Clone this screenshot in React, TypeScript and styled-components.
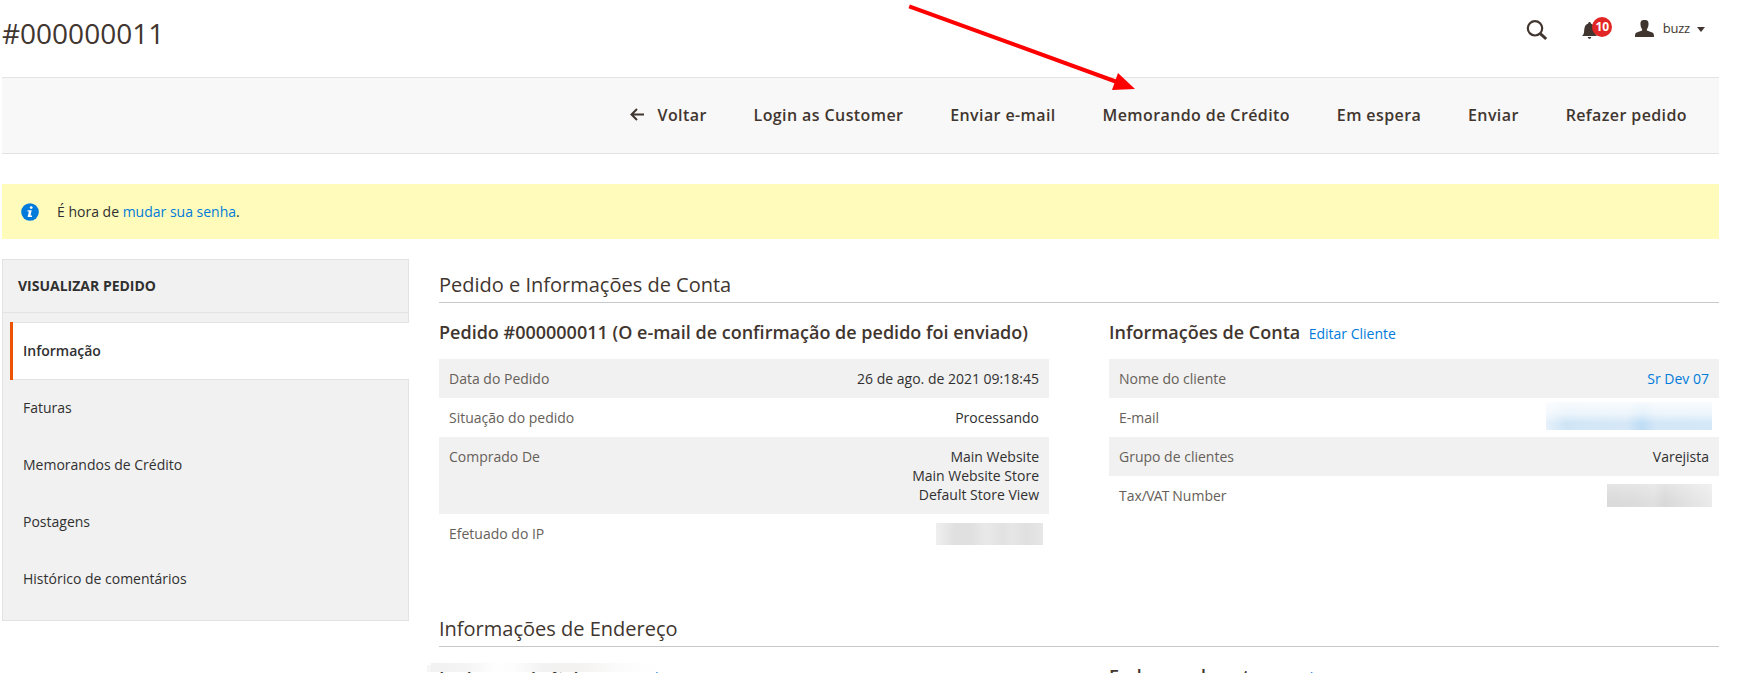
import React from "react";
import styled, { createGlobalStyle, css } from "styled-components";

const GlobalStyle = createGlobalStyle`
  * { box-sizing: border-box; }
  body { margin: 0; background: #fff; overflow: hidden; }
`;

const Page = styled.div`
  position: relative;
  width: 1748px;
  height: 673px;
  overflow: hidden;
  padding: 0 29px 0 2px;
  font-family: "Open Sans", "Liberation Sans", sans-serif;
  font-size: 14px;
  line-height: 19px;
  color: #303030;
`;

const Header = styled.header`
  display: flex;
  justify-content: space-between;
  height: 77px;
`;

const PageTitle = styled.h1`
  margin: 14px 0 0;
  font-size: 28px;
  font-weight: 400;
  line-height: 38px;
  color: #41362f;
`;

const HeaderTools = styled.div`
  display: flex;
  align-items: flex-start;
  padding-right: 14px;
  color: #41362f;
`;

const SearchButton = styled.div`
  display: flex;
  margin: 20px 34px 0 0;
`;

const Notifications = styled.div`
  position: relative;
  display: flex;
  width: 30px;
  margin: 22px 23px 0 0;
`;

const Badge = styled.span`
  position: absolute;
  left: 10.5px;
  top: -5px;
  width: 20px;
  height: 20px;
  border-radius: 50%;
  background: #e22626;
  color: #fff;
  font-size: 12px;
  font-weight: 700;
  letter-spacing: -0.3px;
  line-height: 20px;
  text-align: center;
`;

const Account = styled.div`
  display: flex;
  align-items: flex-start;
  margin-top: 20px;
`;

const AccountName = styled.span`
  margin: -1px 7px 0 9px;
  font-size: 13px;
  letter-spacing: -0.2px;
  line-height: 18px;
`;

const Caret = styled.span`
  margin-top: 7px;
  width: 0;
  height: 0;
  border: 4px solid transparent;
  border-top: 5px solid #41362f;
  border-bottom: 0;
`;

const Toolbar = styled.div`
  display: flex;
  align-items: center;
  justify-content: flex-end;
  gap: 46.9px;
  height: 77px;
  padding: 0 32px 2px 0;
  background: #f8f8f8;
  border-top: 1px solid #e3e3e3;
  border-bottom: 1px solid #e3e3e3;
`;

const ActionButton = styled.button`
  display: flex;
  align-items: center;
  gap: 14px;
  padding: 0;
  border: 0;
  background: none;
  color: #41362f;
  font: 600 16px/22px "Open Sans", "Liberation Sans", sans-serif;
  letter-spacing: 0.4px;
  white-space: nowrap;
`;

const Notice = styled.div`
  display: flex;
  align-items: center;
  gap: 18px;
  height: 55px;
  margin: 30px 0 20px;
  padding-left: 19px;
  background: #fffbbb;
`;

const Link = styled.a`
  color: #007bdb;
  text-decoration: none;
`;

const Columns = styled.div`
  display: flex;
  align-items: flex-start;
  gap: 30px;
`;

const Sidebar = styled.nav`
  width: 407px;
  height: 362px;
  background: #f1f1f1;
  border: 1px solid #e3e3e3;
`;

const SidebarTitle = styled.div`
  height: 53px;
  padding: 16px 15px;
  border-bottom: 1px solid #e3e3e3;
  font-weight: 700;
  margin-bottom: 9px;
`;

const SidebarItem = styled.div<{ $active?: boolean }>`
  height: 57px;
  margin-left: 7px;
  padding: 18px 10px 0 13px;
  ${(p) =>
    p.$active &&
    css`
      height: 58px;
      margin-right: -1px;
      padding-top: 19px;
      background: #fff;
      box-shadow: inset 3px 0 0 #eb5202, inset 0 1px 0 #e3e3e3, inset 0 -1px 0 #e3e3e3;
      font-weight: 600;
    `}
`;

const Main = styled.main`
  flex: 1;
  padding-top: 11px;
`;

const SectionTitle = styled.h2`
  height: 33px;
  margin: 0 0 17px;
  padding-top: 1px;
  border-bottom: 1px solid #c8c8c8;
  font-size: 20px;
  font-weight: 400;
  line-height: 28px;
  color: #41362f;
`;

const Section = styled.section<{ $height?: number }>`
  ${(p) => p.$height && `height: ${p.$height}px;`}
`;

const TwoColumns = styled.div`
  display: grid;
  grid-template-columns: 610px 610px;
  gap: 60px;
`;

const BlockTitle = styled.div`
  display: flex;
  align-items: baseline;
  gap: 8.5px;
  height: 39px;
`;

const BlockHeading = styled.h3`
  margin: 0;
  font-size: 18px;
  font-weight: 600;
  line-height: 25px;
  color: #41362f;
`;

const Row = styled.div<{ $shaded?: boolean }>`
  display: flex;
  justify-content: space-between;
  min-height: 39px;
  padding: 10px;
  background: ${(p) => (p.$shaded ? "#f1f1f1" : "#fff")};
`;

const Label = styled.span`
  color: #666059;
`;

const TightText = styled.span`
  letter-spacing: -0.8px;
`;

const Value = styled.span`
  text-align: right;
  white-space: pre-line;
`;

const Redaction = styled.span<{ $w: number; $h: number; $top: number; $right?: number; $fill: string }>`
  width: ${(p) => p.$w}px;
  height: ${(p) => p.$h}px;
  margin: ${(p) => p.$top}px ${(p) => p.$right ?? -4}px -20px 0;
  background: ${(p) => p.$fill};
`;

const AddressHaze = styled.div`
  position: absolute;
  left: 431px;
  top: 663px;
  width: 230px;
  height: 9px;
  background: linear-gradient(90deg, #f1f1f1, #f4f4f4 15%, #fefefe 28%, #fdfdfd 35%, #f2f2f2 50%, #f3f2f0 65%, #fbfbfb 80%, #fff);
  box-shadow: -4px 2px 0 #f6f6f6;
  clip-path: inset(0 0 0 -4px);
`;

const AnnotationArrow = styled.svg`
  position: absolute;
  left: 900px;
  top: 0;
  pointer-events: none;
`;

const greyIp =
  "linear-gradient(90deg, #efefef, #e0e0e0 18%, #e0e0e0 32%, #e9e9e9 47%, #e2e2e2 62%, #e6e6e6 72%, #e0e0e0 84%, #e6e6e6)";
const blueMail =
  "linear-gradient(180deg, rgba(255,255,255,.85), rgba(255,255,255,.6) 40%, rgba(255,255,255,0) 75%), linear-gradient(90deg, #e6f1fb, #cfe5f6 12%, #d3e7f7 25%, #d6e8f7 48%, #bfddf5 58%, #d3e7f7 66%, #d4e8f8)";
const greyVat =
  "linear-gradient(180deg, rgba(255,255,255,.3), rgba(255,255,255,0) 80%), linear-gradient(90deg, #d9d9d9, #dcdcdc 30%, #e0e0e0 45%, #d8d8d8 55%, #dfdfdf 70%, #ebebeb)";

const App = () => (
  <Page>
    <GlobalStyle />
    <Header>
      <PageTitle>#000000011</PageTitle>
      <HeaderTools>
        <SearchButton>
          <svg width="22" height="21" viewBox="0 0 22 21" fill="none" stroke="currentColor">
            <circle cx="9" cy="8.3" r="7.2" strokeWidth="2.2" />
            <path d="M14 13.3 20.2 19" strokeWidth="3" />
          </svg>
        </SearchButton>
        <Notifications>
          <svg width="16" height="17" viewBox="0 0 16 17" fill="currentColor">
            <path d="M0 14c2-2 2-3 2.200-6C2.400 4 4 2 6.200 1.400 6.300-.4 8.700-.4 8.800 1.400 11 2 12.600 4 12.800 8c.2 3 .4 4 2.200 6z" />
            <path d="M5.800 15h3.400c0 2.400-3.400 2.400-3.400 0z" />
          </svg>
          <Badge>10</Badge>
        </Notifications>
        <Account>
          <svg width="19" height="17" viewBox="0 0 19 17" fill="currentColor">
            <path d="M9.500 0C12.700 0 13.800 1.400 13.500 4.600 13.400 7 12.700 8.300 11.900 9.200V10.600L17.300 12.600C18.700 13.200 19 14.500 19 17H0C0 14.500 .3 13.200 1.700 12.600L7.100 10.600V9.200C6.300 8.300 5.600 7 5.500 4.600 5.200 1.400 6.300 0 9.500 0z" />
          </svg>
          <AccountName>buzz</AccountName>
          <Caret />
        </Account>
      </HeaderTools>
    </Header>

    <Toolbar>
      <ActionButton>
        <svg width="14" height="13" viewBox="0 0 14 13" fill="none" stroke="currentColor" strokeWidth="2">
          <path d="M1.500 6.500H14M7 1 1.500 6.500 7 12" />
        </svg>
        Voltar
      </ActionButton>
      <ActionButton>Login as Customer</ActionButton>
      <ActionButton>Enviar e-mail</ActionButton>
      <ActionButton>Memorando de Crédito</ActionButton>
      <ActionButton>Em espera</ActionButton>
      <ActionButton>Enviar</ActionButton>
      <ActionButton>Refazer pedido</ActionButton>
    </Toolbar>

    <Notice>
      <svg width="18" height="18" viewBox="0 0 18 18">
        <circle cx="9" cy="9" r="8.8" fill="#007bdb" />
        <circle cx="10.200" cy="4.600" r="1.400" fill="#fff" />
        <path d="M6.500 7.300h4.200l-1.200 5.300h1.500v1.300H6.600l1.300-5.300H6.500z" fill="#fff" />
      </svg>
      <span>
        É hora de <Link>mudar sua senha</Link>.
      </span>
    </Notice>

    <Columns>
      <Sidebar>
        <SidebarTitle>VISUALIZAR PEDIDO</SidebarTitle>
        <SidebarItem $active>Informação</SidebarItem>
        <SidebarItem>Faturas</SidebarItem>
        <SidebarItem>Memorandos de Crédito</SidebarItem>
        <SidebarItem>Postagens</SidebarItem>
        <SidebarItem>Histórico de comentários</SidebarItem>
      </Sidebar>

      <Main>
        <Section $height={344}>
          <SectionTitle>Pedido e Informações de Conta</SectionTitle>
          <TwoColumns>
            <div>
              <BlockTitle>
                <BlockHeading>Pedido #000000011 (O e-mail de confirmação de pedido foi enviado)</BlockHeading>
              </BlockTitle>
              <Row $shaded>
                <Label>Data do Pedido</Label>
                <Value>26 de ago. de 2021 09:18:45</Value>
              </Row>
              <Row>
                <Label>Situação do pedido</Label>
                <Value>Processando</Value>
              </Row>
              <Row $shaded>
                <Label>Comprado De</Label>
                <Value>{"Main Website\nMain Website Store\nDefault Store View"}</Value>
              </Row>
              <Row>
                <Label>Efetuado do IP</Label>
                <Redaction $w={107} $h={22} $top={-1} $fill={greyIp} />
              </Row>
            </div>
            <div>
              <BlockTitle>
                <BlockHeading>Informações de Conta</BlockHeading>
                <Link>Editar Cliente</Link>
              </BlockTitle>
              <Row $shaded>
                <Label>Nome do cliente</Label>
                <Value>
                  <Link>Sr Dev 07</Link>
                </Value>
              </Row>
              <Row>
                <Label>E-mail</Label>
                <Redaction $w={166} $h={28} $top={-6} $right={-3} $fill={blueMail} />
              </Row>
              <Row $shaded>
                <Label>Grupo de clientes</Label>
                <Value>Varejista</Value>
              </Row>
              <Row>
                <Label>
                  Tax<TightText>/VAT</TightText> Number
                </Label>
                <Redaction $w={105} $h={23} $top={-2} $right={-3} $fill={greyVat} />
              </Row>
            </div>
          </TwoColumns>
        </Section>

        <Section>
          <SectionTitle>Informações de Endereço</SectionTitle>
          <TwoColumns>
            <BlockTitle>
              <BlockHeading>Endereço de Cobrança</BlockHeading>
              <Link>Editar</Link>
            </BlockTitle>
            <BlockTitle>
              <BlockHeading>Endereço de entrega</BlockHeading>
              <Link>Editar</Link>
            </BlockTitle>
          </TwoColumns>
        </Section>
      </Main>
    </Columns>

    <AddressHaze />
    <AnnotationArrow width="240" height="95" viewBox="0 0 240 95">
      <path d="M9.200 6.300 217 82" stroke="#f00" strokeWidth="4" />
      <path d="M218 73 235 89 212 90z" fill="#f00" />
    </AnnotationArrow>
  </Page>
);

export default App;
